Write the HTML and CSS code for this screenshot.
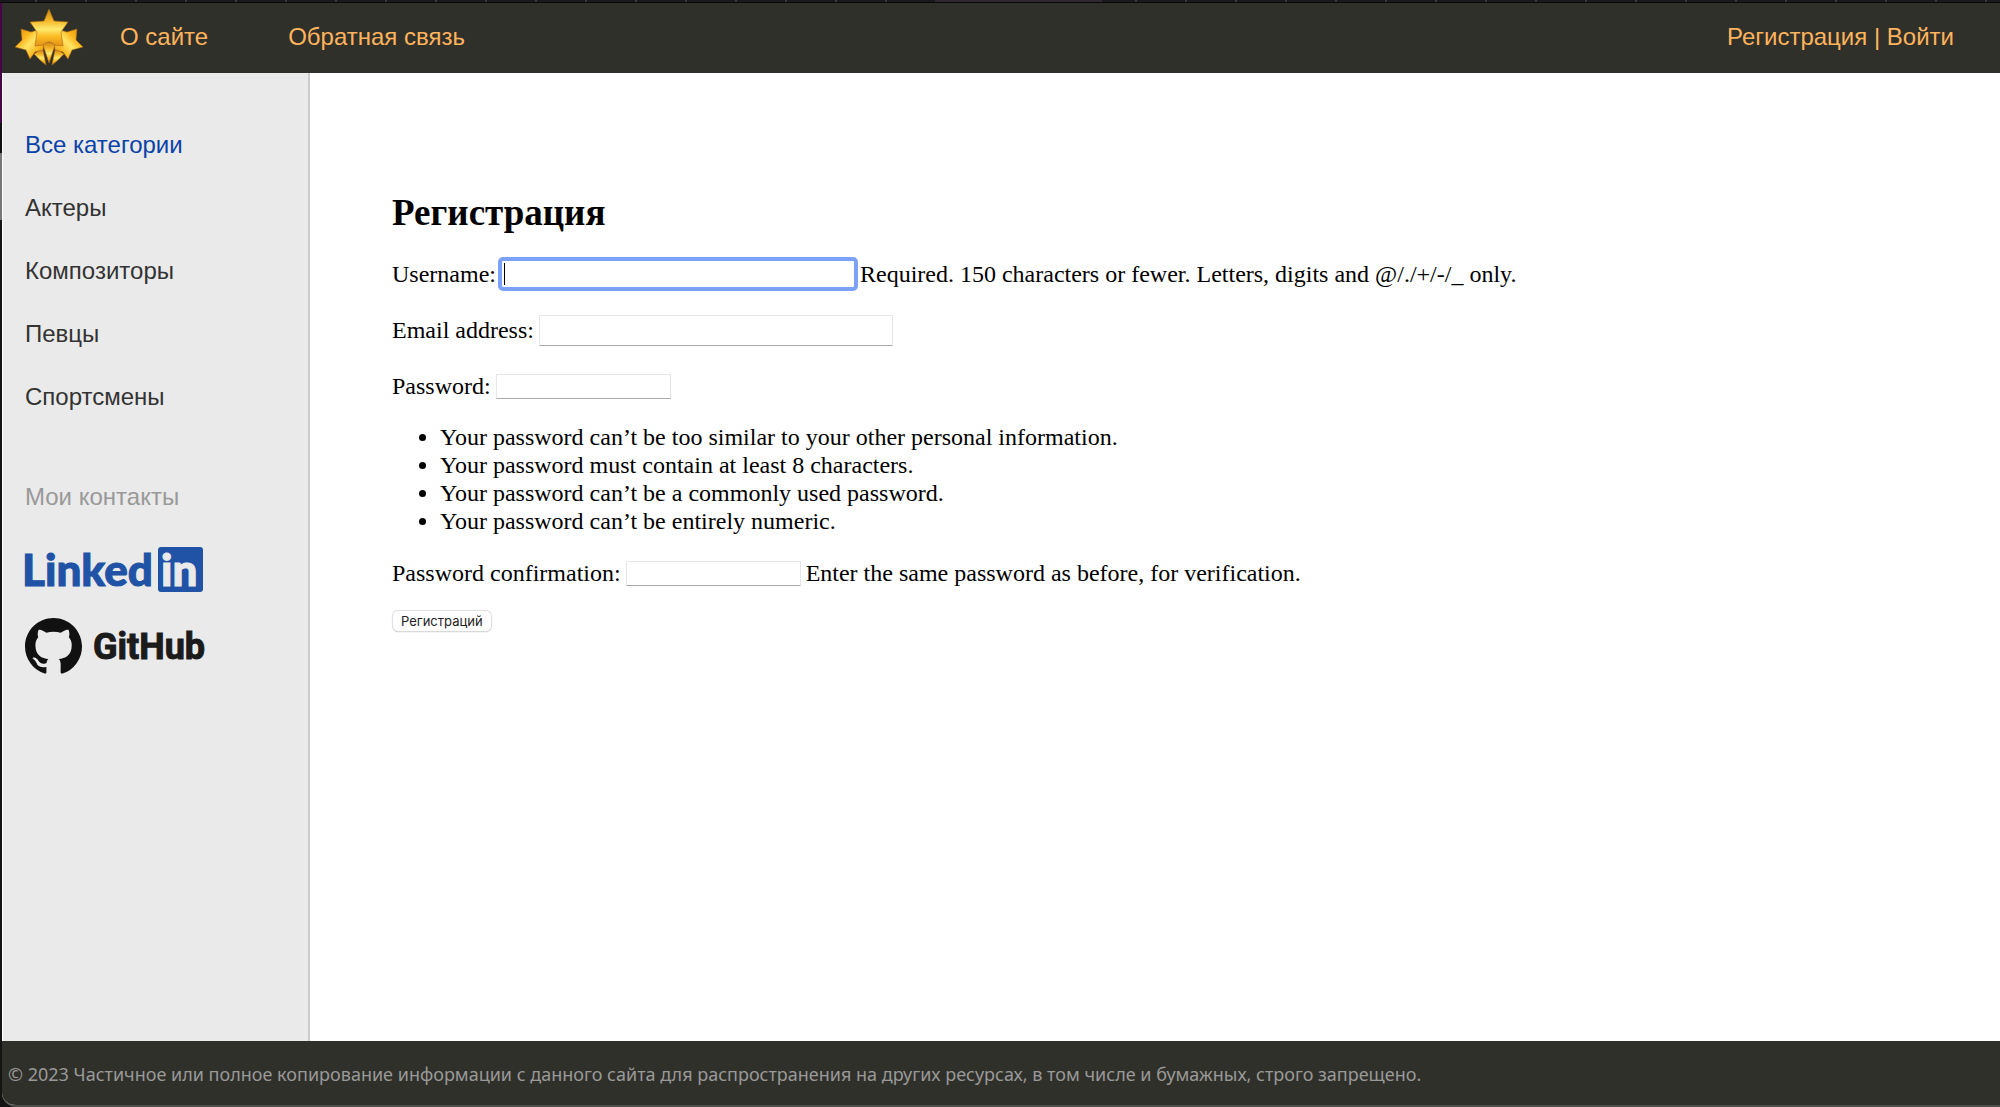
FILE: index.html
```html
<!DOCTYPE html>
<html lang="ru">
<head>
<meta charset="utf-8">
<title>Регистрация</title>
<link rel="stylesheet" href="styles.css">
</head>
<body>
<div class="tabstrip"></div>
<div class="window">
  <header class="header">
    <a class="logo" href="#" aria-label="Главная">
      <svg width="70" height="58" viewBox="0 0 70 58">
        <defs>
          <linearGradient id="gold" x1="0" y1="0" x2="0" y2="1">
            <stop offset="0" stop-color="#c98418"/><stop offset=".3" stop-color="#f5b424"/><stop offset=".55" stop-color="#ffe96e"/><stop offset=".75" stop-color="#fbb91f"/><stop offset="1" stop-color="#e2921a"/>
          </linearGradient>
          <linearGradient id="side" x1="0" y1="0" x2="1" y2="1">
            <stop offset="0" stop-color="#d58d16"/><stop offset=".3" stop-color="#fbb51c"/><stop offset=".5" stop-color="#ffe566"/><stop offset=".75" stop-color="#f9b31c"/><stop offset="1" stop-color="#d98c15"/>
          </linearGradient>
          <linearGradient id="side2" x1="1" y1="0" x2="0" y2="1">
            <stop offset="0" stop-color="#d58d16"/><stop offset=".3" stop-color="#fbb51c"/><stop offset=".5" stop-color="#ffe566"/><stop offset=".75" stop-color="#f9b31c"/><stop offset="1" stop-color="#d98c15"/>
          </linearGradient>
        </defs>
        <g stroke="#a86a12" stroke-width=".6" stroke-linejoin="round">
          <path d="M20 46C25 42 27 41 29 42L32 57C28 54 24 50 20 46Z" fill="url(#gold)"/>
          <path d="M50 46C45 42 43 41 41 42L38 57C42 54 46 50 50 46Z" fill="url(#gold)"/>
          <path d="M7 21L17 24L24 22L30 36L29 42L21 44L16 51L12 42L1 39L8 32Z" fill="url(#side)"/>
          <path d="M63 21L53 24L46 22L40 36L41 42L49 44L54 51L58 42L69 39L62 32Z" fill="url(#side2)"/>
          <path d="M35 1L40 13L54 14L47 24L49 38L40 37L35 34L30 37L21 38L23 24L16 14L30 13Z" fill="url(#gold)"/>
          <path d="M29 37Q35 31 41 37L35 55Z" fill="url(#gold)"/>
        </g>
      </svg>
    </a>
    <nav class="menu">
      <a href="#">О сайте</a>
      <a href="#">Обратная связь</a>
    </nav>
    <div class="account"><a href="#">Регистрация</a> | <a href="#">Войти</a></div>
  </header>
  <div class="page">
    <aside class="sidebar">
      <ul class="categories">
        <li class="selected">Все категории</li>
        <li><a href="#">Актеры</a></li>
        <li><a href="#">Композиторы</a></li>
        <li><a href="#">Певцы</a></li>
        <li><a href="#">Спортсмены</a></li>
      </ul>
      <p class="contacts">Мои контакты</p>
      <a class="social" href="#">
        <svg width="180" height="46" viewBox="0 0 180 46">
          <text class="li-word" x="-3" y="39">Linked</text>
          <rect x="133" y="0" width="45" height="45" rx="3" fill="#2052a5"/>
          <text class="li-in" x="136" y="39">in</text>
        </svg>
      </a>
      <a class="social" href="#">
        <svg width="180" height="56" viewBox="0 0 180 56">
          <path transform="scale(3.5625)" fill="#111" d="M8 0C3.58 0 0 3.58 0 8c0 3.54 2.29 6.53 5.47 7.59.4.07.55-.17.55-.38 0-.19-.01-.82-.01-1.49-2.01.37-2.53-.49-2.69-.94-.09-.23-.48-.94-.82-1.13-.28-.15-.68-.52-.01-.53.63-.01 1.08.58 1.23.82.72 1.21 1.87.87 2.33.66.07-.52.28-.87.51-1.07-1.78-.2-3.64-.89-3.64-3.95 0-.87.31-1.59.82-2.15-.08-.2-.36-1.02.08-2.12 0 0 .67-.21 2.2.82.64-.18 1.32-.27 2-.27s1.36.09 2 .27c1.53-1.04 2.2-.82 2.2-.82.44 1.1.16 1.92.08 2.12.51.56.82 1.27.82 2.15 0 3.07-1.87 3.75-3.65 3.95.29.25.54.73.54 1.48 0 1.07-.01 1.93-.01 2.2 0 .21.15.46.55.38A8.01 8.01 0 0 0 16 8c0-4.42-3.58-8-8-8z"/>
          <text class="gh-word" x="68" y="41">GitHub</text>
        </svg>
      </a>
    </aside>
    <main class="content">
      <h1>Регистрация</h1>
      <form class="form">
        <div class="row">
          <label for="username">Username:</label>
          <input class="wide active" id="username" type="text" maxlength="150">
          <span>Required. 150 characters or fewer. Letters, digits and @/./+/-/_ only.</span>
        </div>
        <div class="row">
          <label for="email">Email address:</label>
          <input class="wide" id="email" type="email">
        </div>
        <div class="row">
          <label for="password">Password:</label>
          <input class="narrow" id="password" type="password">
        </div>
        <ul class="hints">
          <li>Your password can’t be too similar to your other personal information.</li>
          <li>Your password must contain at least 8 characters.</li>
          <li>Your password can’t be a commonly used password.</li>
          <li>Your password can’t be entirely numeric.</li>
        </ul>
        <div class="row last">
          <label for="confirm">Password confirmation:</label>
          <input class="narrow" id="confirm" type="password">
          <span>Enter the same password as before, for verification.</span>
        </div>
        <button type="submit">Регистраций</button>
      </form>
    </main>
  </div>
  <footer class="footer">© 2023 Частичное или полное копирование информации с данного сайта для распространения на других ресурсах, в том числе и бумажных, строго запрещено.</footer>
</div>
</body>
</html>
```
FILE: styles.css
```css
* { box-sizing: border-box; }

body {
  margin: 0;
  min-height: 100vh;
  display: flex;
  flex-direction: column;
  background: linear-gradient(#4a0548 123px, #111 123px, #111 153px, #777 153px, #777 220px, #141414 220px);
  font-family: "Liberation Serif", "Times New Roman", serif;
  font-size: 24px;
  line-height: 28px;
  color: #000;
}

a { color: inherit; text-decoration: none; }

.tabstrip {
  height: 3px;
  border-bottom: 1px solid #080808;
  background:
    linear-gradient(#302830, #302830) 935px 0 / 167px 3px no-repeat,
    repeating-linear-gradient(90deg, #19191d 0 35px, #3c3c40 35px 37px, #19191d 37px 50px);
}

.window {
  flex: 1;
  display: flex;
  flex-direction: column;
  margin-left: 2px;
  border-bottom: 2px solid #4f4f4b;
  border-bottom-left-radius: 14px;
  background: #fff;
  overflow: hidden;
}

.header {
  display: flex;
  align-items: center;
  height: 70px;
  padding: 0 46px 2px 12px;
  background: #30302a;
  color: #ffb35c;
  font-family: "Liberation Sans", Arial, sans-serif;
}

.logo { display: flex; }

.menu {
  display: flex;
  gap: 80px;
  padding-left: 36px;
}

.account { margin-left: auto; }

.page {
  flex: 1;
  display: flex;
}

.sidebar {
  width: 308px;
  padding: 58px 22px;
  border-left: 1px solid #fff;
  border-right: 2px solid #ccc;
  background: #eaeaea;
  color: #333;
  font-family: "Liberation Sans", Arial, sans-serif;
}

.categories {
  display: flex;
  flex-direction: column;
  gap: 35px;
  margin: 0;
  padding: 0;
  list-style: none;
}

.selected { color: #0a43a8; }

.contacts {
  margin: 72px 0 36px;
  color: #999;
}

.social {
  display: block;
  margin-bottom: 25px;
}

.social svg {
  display: block;
  overflow: visible;
}

.li-word, .li-in {
  font: 900 44px Lato, sans-serif;
  fill: #2052a5;
  stroke: #2052a5;
  stroke-width: 1px;
}

.li-in {
  fill: #eaeaea;
  stroke: #eaeaea;
}

.gh-word {
  font: 700 36px Roboto, sans-serif;
  fill: #1b1b1b;
  stroke: #1b1b1b;
  stroke-width: 1px;
}

.content {
  flex: 1;
  padding: 119px 82px;
}

h1 {
  margin: 0 0 26px;
  font-size: 37px;
  line-height: 42px;
}

.row {
  display: flex;
  align-items: center;
  gap: 5px;
  height: 28px;
  margin-bottom: 28px;
}

input {
  margin: 0;
  padding: 0 4px;
  border: 1px solid #e6e6e6;
  border-bottom: 1px solid #aaa;
  background: #fff;
  font: inherit;
}

.wide { width: 354px; height: 31px; }
.narrow { width: 175px; height: 25px; }

.wide.active {
  height: 28px;
  outline: 4px solid #7ba2f8;
  outline-offset: -1px;
  border-radius: 2px;
  background: linear-gradient(#000, #000) 2px 2px / 1px 22px no-repeat;
}

.hints {
  margin: -5px 0 24px;
  padding-left: 48px;
}

.row.last { margin-bottom: 24px; }

button {
  display: block;
  height: 20px;
  margin-left: 1px;
  padding: 0 8px;
  border: 0;
  border-radius: 5px;
  background: #fff;
  box-shadow: 0 0 1px 1px #ddd, 0 1px 1px #aaa;
  font: 13px/20px Inter, sans-serif;
  color: #222;
}

.footer {
  height: 64px;
  padding: 0 6px;
  background: #30302a;
  color: #999;
  font: 18px/66px "Noto Sans", Verdana, sans-serif;
}
```
